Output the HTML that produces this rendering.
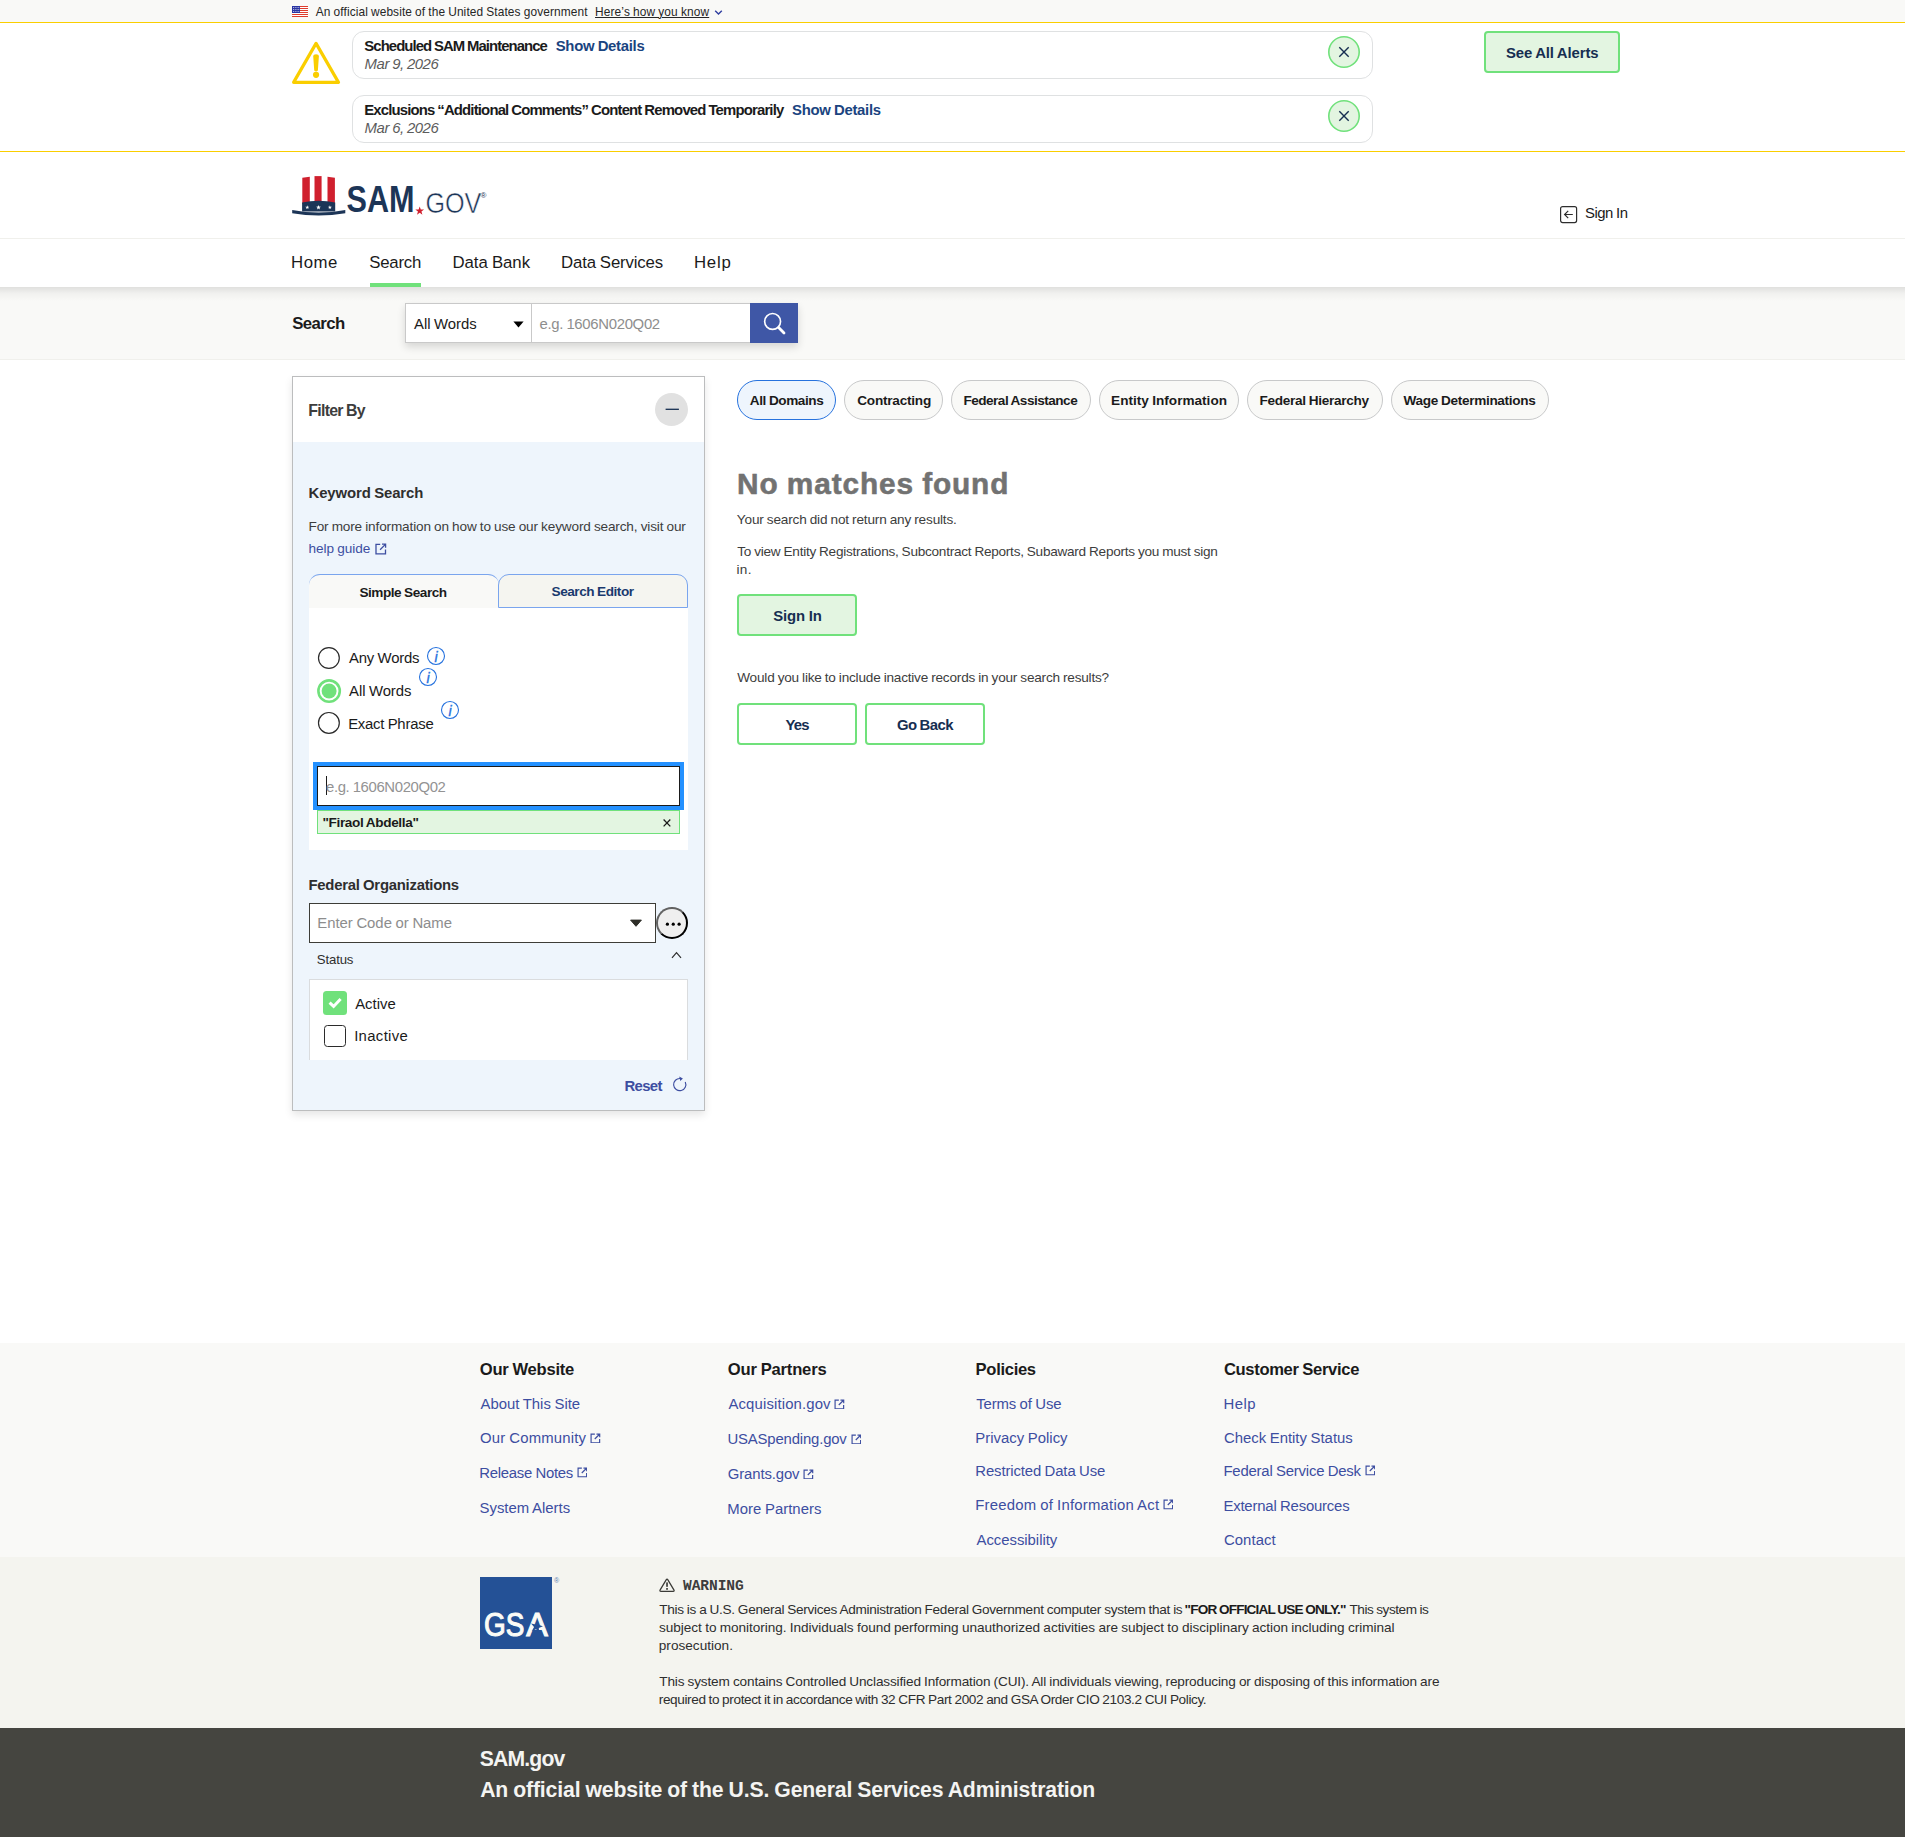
<!DOCTYPE html>
<html lang="en"><head><meta charset="utf-8"><title>SAM.gov | Search</title><style>
html,body{margin:0;padding:0;}
body{width:1905px;height:1837px;position:relative;overflow:hidden;background:#fff;
font-family:"Liberation Sans",sans-serif;color:#1b1b1b;}
.b{position:absolute;box-sizing:border-box;display:block;}
.t{position:absolute;white-space:nowrap;display:block;}
</style></head>
<body>
<div class="b" style="left:0px;top:0px;width:1905px;height:22px;background:#f9f9f7;"></div>
<div class="b" style="left:0px;top:22px;width:1905px;height:1px;background:#face00;"></div>
<svg class="b" style="left:292px;top:6px;" width="16" height="11" viewBox="0 0 16 11"><rect width="16" height="11" fill="#fff"/><rect y="0" width="16" height="1" fill="#de3c2d"/><rect y="2" width="16" height="1" fill="#de3c2d"/><rect y="4" width="16" height="1" fill="#de3c2d"/><rect y="6" width="16" height="1" fill="#de3c2d"/><rect y="8" width="16" height="1" fill="#de3c2d"/><rect y="10" width="16" height="1" fill="#de3c2d"/><rect width="8" height="7" fill="#2a35a3"/><rect x="1.00" y="1.10" width="0.8" height="0.8" fill="#fff"/><rect x="2.80" y="1.10" width="0.8" height="0.8" fill="#fff"/><rect x="4.60" y="1.10" width="0.8" height="0.8" fill="#fff"/><rect x="6.40" y="1.10" width="0.8" height="0.8" fill="#fff"/><rect x="1.00" y="3.10" width="0.8" height="0.8" fill="#fff"/><rect x="2.80" y="3.10" width="0.8" height="0.8" fill="#fff"/><rect x="4.60" y="3.10" width="0.8" height="0.8" fill="#fff"/><rect x="6.40" y="3.10" width="0.8" height="0.8" fill="#fff"/><rect x="1.00" y="5.10" width="0.8" height="0.8" fill="#fff"/><rect x="2.80" y="5.10" width="0.8" height="0.8" fill="#fff"/><rect x="4.60" y="5.10" width="0.8" height="0.8" fill="#fff"/><rect x="6.40" y="5.10" width="0.8" height="0.8" fill="#fff"/></svg>
<span class="t" id="t1" style="left:315.76px;top:3px;font-size:11.90px;line-height:18px;font-weight:400;color:#262626;font-family:'Liberation Sans', sans-serif;letter-spacing:0.109px;word-spacing:-0.36px;">An official website of the United States government</span>
<span class="t" id="t2" style="left:595.04px;top:3px;font-size:11.90px;line-height:18px;font-weight:400;color:#262626;font-family:'Liberation Sans', sans-serif;letter-spacing:0.129px;word-spacing:-0.36px;text-decoration:underline;text-underline-offset:1.2px;text-decoration-thickness:1px;">Here’s how you know</span>
<svg class="b" style="left:714px;top:8.8px;" width="9" height="7" viewBox="0 0 9 7"><path d="M1.2 1.8 L4.5 5 L7.8 1.8" fill="none" stroke="#2f3ea0" stroke-width="1.4"/></svg>
<div class="b" style="left:0px;top:151px;width:1905px;height:1px;background:#face00;"></div>
<svg class="b" style="left:290px;top:40px;" width="52" height="46" viewBox="0 0 52 46"><path d="M26.05 3.4 L48.5 42.35 H3.6 Z" fill="none" stroke="#face00" stroke-width="3.2" stroke-linejoin="round"/><path d="M23.2 16 Q23.2 14.3 26.05 14.3 Q28.9 14.3 28.9 16 L27.9 30.3 Q27.9 31.4 26.05 31.4 Q24.2 31.4 24.2 30.3 Z" fill="#face00"/><circle cx="26.05" cy="34.8" r="3.1" fill="#face00"/></svg>
<div class="b" style="left:352px;top:31px;width:1021px;height:48px;border:1px solid #dfe1e2;border-radius:12px;background:#fff;"></div>
<span class="t" id="t3" style="left:364.35px;top:36px;font-size:14.90px;line-height:20px;font-weight:700;color:#1b1b1b;font-family:'Liberation Sans', sans-serif;letter-spacing:-0.934px;word-spacing:-0.45px;">Scheduled SAM Maintenance</span>
<span class="t" id="t4" style="left:555.72px;top:36px;font-size:14.90px;line-height:20px;font-weight:700;color:#1a4480;font-family:'Liberation Sans', sans-serif;letter-spacing:-0.291px;word-spacing:-0.45px;">Show Details</span>
<span class="t" id="t5" style="left:364.61px;top:54px;font-size:14.90px;line-height:20px;font-weight:400;color:#5c5c5c;font-family:'Liberation Sans', sans-serif;letter-spacing:-0.451px;word-spacing:-0.45px;font-style:italic;">Mar 9, 2026</span>
<svg class="b" style="left:1328px;top:36px;" width="32" height="32" viewBox="0 0 32 32"><circle cx="16" cy="16" r="15.2" fill="#e3f5e1" stroke="#70e17b" stroke-width="1.6"/><path d="M11.3 11.3 L20.7 20.7 M20.7 11.3 L11.3 20.7" stroke="#162e51" stroke-width="1.4" fill="none"/></svg>
<div class="b" style="left:352px;top:95px;width:1021px;height:48px;border:1px solid #dfe1e2;border-radius:12px;background:#fff;"></div>
<span class="t" id="t6" style="left:364.14px;top:100px;font-size:14.90px;line-height:20px;font-weight:700;color:#1b1b1b;font-family:'Liberation Sans', sans-serif;letter-spacing:-0.830px;word-spacing:-0.45px;">Exclusions “Additional Comments” Content Removed Temporarily</span>
<span class="t" id="t7" style="left:792.00px;top:100px;font-size:14.90px;line-height:20px;font-weight:700;color:#1a4480;font-family:'Liberation Sans', sans-serif;letter-spacing:-0.286px;word-spacing:-0.45px;">Show Details</span>
<span class="t" id="t8" style="left:364.61px;top:118px;font-size:14.90px;line-height:20px;font-weight:400;color:#5c5c5c;font-family:'Liberation Sans', sans-serif;letter-spacing:-0.451px;word-spacing:-0.45px;font-style:italic;">Mar 6, 2026</span>
<svg class="b" style="left:1328px;top:100px;" width="32" height="32" viewBox="0 0 32 32"><circle cx="16" cy="16" r="15.2" fill="#e3f5e1" stroke="#70e17b" stroke-width="1.6"/><path d="M11.3 11.3 L20.7 20.7 M20.7 11.3 L11.3 20.7" stroke="#162e51" stroke-width="1.4" fill="none"/></svg>
<div class="b" style="left:1484px;top:31px;width:136px;height:42px;background:#e3f5e1;border:2px solid #70e17b;border-radius:4px;"></div>
<span class="t" id="t9" style="left:1506.00px;top:43px;font-size:14.90px;line-height:20px;font-weight:700;color:#162e51;font-family:'Liberation Sans', sans-serif;letter-spacing:-0.115px;word-spacing:-0.45px;">See All Alerts</span>
<div class="b" style="left:0px;top:238px;width:1905px;height:1px;background:#f0f0ec;"></div>
<svg class="b" style="left:291px;top:175px;" width="202" height="46" viewBox="0 0 202 46"><path d="M11.3 2.7 L18.8 1.8 V29 H11.3 Z" fill="#d0202e"/><path d="M23.5 1.1 H30.6 V29 H23.5 Z" fill="#d0202e"/><path d="M36.5 1.8 L43.9 2.7 V29 H36.5 Z" fill="#d0202e"/><path d="M11.1 27.5 Q27.65 23.9 44.2 27.5 V36.5 H11.1 Z" fill="#1c3557"/><path d="M1.2 34.9 Q27.7 39.9 54.3 34.9 L54.3 38.2 Q27.7 42.6 1.2 38.2 Z" fill="#1c3557"/><polygon transform="translate(16.3,32.4) scale(0.21)" points="0,-10 2.35,-3.24 9.51,-3.09 3.8,1.24 5.88,8.09 0,4 -5.88,8.09 -3.8,1.24 -9.51,-3.09 -2.35,-3.24" fill="#fff"/><polygon transform="translate(27.5,32.4) scale(0.25)" points="0,-10 2.35,-3.24 9.51,-3.09 3.8,1.24 5.88,8.09 0,4 -5.88,8.09 -3.8,1.24 -9.51,-3.09 -2.35,-3.24" fill="#fff"/><polygon transform="translate(38.9,32.4) scale(0.21)" points="0,-10 2.35,-3.24 9.51,-3.09 3.8,1.24 5.88,8.09 0,4 -5.88,8.09 -3.8,1.24 -9.51,-3.09 -2.35,-3.24" fill="#fff"/><text x="55.6" y="37.4" font-family="Liberation Sans, sans-serif" font-weight="700" font-size="36.9" fill="#1c3557" textLength="68" lengthAdjust="spacingAndGlyphs">SAM</text><polygon transform="translate(128.7,36) scale(0.46)" points="0,-10 2.35,-3.24 9.51,-3.09 3.8,1.24 5.88,8.09 0,4 -5.88,8.09 -3.8,1.24 -9.51,-3.09 -2.35,-3.24" fill="#d0202e"/><text x="134.4" y="38" font-family="Liberation Sans, sans-serif" font-weight="400" font-size="29.3" fill="#1c3557" stroke="#fff" stroke-width="0.55" textLength="56" lengthAdjust="spacingAndGlyphs">GOV</text><text x="189.6" y="23.1" font-family="Liberation Sans, sans-serif" font-size="8" fill="#1c3557">®</text></svg>
<svg class="b" style="left:1559px;top:205px;" width="20" height="20" viewBox="0 0 20 20"><rect x="1.6" y="1.6" width="16" height="16" rx="2" fill="none" stroke="#2e2e2e" stroke-width="1.2"/><path d="M13.8 9.5 H5.8 M9.2 5.9 L5.6 9.5 L9.2 13.1" fill="none" stroke="#2e2e2e" stroke-width="1.2"/></svg>
<span class="t" id="t10" style="left:1585.01px;top:203px;font-size:14.90px;line-height:20px;font-weight:400;color:#1b1b1b;font-family:'Liberation Sans', sans-serif;letter-spacing:-0.475px;word-spacing:-0.45px;">Sign In</span>
<div class="b" style="left:0px;top:239px;width:1905px;height:48px;background:#fff;"></div>
<span class="t" id="t11" style="left:290.99px;top:251px;font-size:16.80px;line-height:23px;font-weight:400;color:#1b1b1b;font-family:'Liberation Sans', sans-serif;letter-spacing:0.554px;word-spacing:-0.50px;">Home</span>
<span class="t" id="t12" style="left:369.16px;top:251px;font-size:16.80px;line-height:23px;font-weight:400;color:#1b1b1b;font-family:'Liberation Sans', sans-serif;letter-spacing:-0.184px;word-spacing:-0.50px;">Search</span>
<span class="t" id="t13" style="left:452.48px;top:251px;font-size:16.80px;line-height:23px;font-weight:400;color:#1b1b1b;font-family:'Liberation Sans', sans-serif;letter-spacing:-0.039px;word-spacing:-0.50px;">Data Bank</span>
<span class="t" id="t14" style="left:560.98px;top:251px;font-size:16.80px;line-height:23px;font-weight:400;color:#1b1b1b;font-family:'Liberation Sans', sans-serif;letter-spacing:-0.146px;word-spacing:-0.50px;">Data Services</span>
<span class="t" id="t15" style="left:693.98px;top:251px;font-size:16.80px;line-height:23px;font-weight:400;color:#1b1b1b;font-family:'Liberation Sans', sans-serif;letter-spacing:0.747px;word-spacing:-0.50px;">Help</span>
<div class="b" style="left:370px;top:283px;width:51px;height:4px;background:#70e17b;"></div>
<div class="b" style="left:0px;top:287px;width:1905px;height:72px;background:#f9f9f7;"></div>
<div class="b" style="left:0px;top:287px;width:1905px;height:14px;background:linear-gradient(rgba(0,0,0,.10),rgba(0,0,0,.035) 45%,rgba(0,0,0,0));"></div>
<div class="b" style="left:0px;top:359px;width:1905px;height:1px;background:#f0f0ec;"></div>
<span class="t" id="t16" style="left:292.19px;top:312px;font-size:16.80px;line-height:23px;font-weight:700;color:#1b1b1b;font-family:'Liberation Sans', sans-serif;letter-spacing:-0.558px;word-spacing:-0.50px;">Search</span>
<div class="b" style="left:405px;top:303px;width:393px;height:40px;box-shadow:0 4px 8px rgba(0,0,0,.14);"></div>
<div class="b" style="left:405px;top:303px;width:127px;height:40px;background:#fff;border:1px solid #c9c9c9;"></div>
<div class="b" style="left:531px;top:303px;width:220px;height:40px;background:#fff;border:1px solid #c9c9c9;"></div>
<span class="t" id="t17" style="left:414.07px;top:314px;font-size:14.90px;line-height:20px;font-weight:400;color:#1b1b1b;font-family:'Liberation Sans', sans-serif;letter-spacing:-0.056px;word-spacing:-0.45px;">All Words</span>
<svg class="b" style="left:513px;top:321px;" width="11" height="7" viewBox="0 0 11 7"><path d="M0.4 0.6 H10.6 L5.5 6.6 Z" fill="#000"/></svg>
<span class="t" id="t18" style="left:539.45px;top:314px;font-size:14.90px;line-height:20px;font-weight:400;color:#8e8e8e;font-family:'Liberation Sans', sans-serif;letter-spacing:-0.313px;word-spacing:-0.45px;">e.g. 1606N020Q02</span>
<div class="b" style="left:750px;top:303px;width:48px;height:40px;background:#3f57a6;"></div>
<svg class="b" style="left:760px;top:310px;" width="28" height="26" viewBox="0 0 28 26"><circle cx="12.6" cy="11.45" r="7.95" fill="none" stroke="#fff" stroke-width="1.65"/><path d="M18.6 17.6 L24.0 23.0" stroke="#fff" stroke-width="2.8" stroke-linecap="round"/></svg>
<div class="b" style="left:292px;top:376px;width:413px;height:735px;background:#eef5fc;border:1px solid #bcbdbe;box-shadow:0 4px 8px rgba(0,0,0,.10);"></div>
<div class="b" style="left:293px;top:377px;width:411px;height:65px;background:#fff;"></div>
<span class="t" id="t19" style="left:308.31px;top:400px;font-size:15.90px;line-height:21px;font-weight:700;color:#3d3d3d;font-family:'Liberation Sans', sans-serif;letter-spacing:-0.731px;word-spacing:-0.48px;">Filter By</span>
<svg class="b" style="left:655px;top:393px;" width="33" height="33" viewBox="0 0 33 33"><circle cx="16.5" cy="16.5" r="16.5" fill="#e1e1e1"/><path d="M10.6 16.3 H23.9" stroke="#162e51" stroke-width="1.3"/></svg>
<span class="t" id="t20" style="left:308.52px;top:483px;font-size:14.90px;line-height:20px;font-weight:700;color:#2e2e2e;font-family:'Liberation Sans', sans-serif;letter-spacing:-0.113px;word-spacing:-0.45px;">Keyword Search</span>
<span class="t" id="t21" style="left:308.50px;top:517px;font-size:13.60px;line-height:19px;font-weight:400;color:#3d3d3d;font-family:'Liberation Sans', sans-serif;letter-spacing:-0.151px;word-spacing:-0.41px;">For more information on how to use our keyword search, visit our</span>
<span class="t" id="t22" style="left:308.44px;top:539px;font-size:13.60px;line-height:19px;font-weight:400;color:#3d4ea1;font-family:'Liberation Sans', sans-serif;letter-spacing:-0.042px;word-spacing:-0.41px;">help guide</span>
<svg class="b" style="left:374.4px;top:542.6px;" width="13.6" height="12" viewBox="0 0 12 12"><path d="M5.4 1.3 H1.2 V10.8 H10.7 V6.6" fill="none" stroke="#3d4ea1" stroke-width="1.3"/><path d="M7.2 1.2 H10.8 V4.8 M10.6 1.4 L5.3 6.7" fill="none" stroke="#3d4ea1" stroke-width="1.3"/></svg>
<div class="b" style="left:309px;top:574px;width:190px;height:35px;background:#f9f9f7;border-top:1px solid #7aa5ee;border-radius:11px 11px 0 0;"></div>
<div class="b" style="left:498px;top:574px;width:190px;height:34px;background:#f5f5f0;border:1px solid #7aa5ee;border-radius:11px 11px 0 0;"></div>
<span class="t" id="t23" style="left:359.45px;top:583px;font-size:13.60px;line-height:19px;font-weight:700;color:#1b1b1b;font-family:'Liberation Sans', sans-serif;letter-spacing:-0.467px;word-spacing:-0.41px;">Simple Search</span>
<span class="t" id="t24" style="left:551.57px;top:582px;font-size:13.60px;line-height:19px;font-weight:700;color:#1a3a6e;font-family:'Liberation Sans', sans-serif;letter-spacing:-0.459px;word-spacing:-0.41px;">Search Editor</span>
<div class="b" style="left:309px;top:608px;width:379px;height:242px;background:#fff;"></div>
<svg class="b" style="left:317px;top:646px;" width="24" height="24" viewBox="0 0 24 24"><circle cx="11.9" cy="11.95" r="10.4" fill="#fff" stroke="#2b2b2b" stroke-width="1.2"/></svg>
<span class="t" id="t25" style="left:349.07px;top:648px;font-size:14.90px;line-height:20px;font-weight:400;color:#1b1b1b;font-family:'Liberation Sans', sans-serif;letter-spacing:-0.203px;word-spacing:-0.45px;">Any Words</span>
<svg class="b" style="left:426.1px;top:646.1px;" width="20" height="20" viewBox="0 0 20 20"><circle cx="10" cy="10" r="8.5" fill="#fff" stroke="#2672de" stroke-width="1.1"/><text x="10" y="15.7" text-anchor="middle" font-family="Liberation Sans, sans-serif" font-style="italic" font-size="14.2" fill="#2672de" stroke="#2672de" stroke-width="0.35">i</text></svg>
<svg class="b" style="left:316px;top:678px;" width="26" height="26" viewBox="0 0 26 26"><circle cx="13.1" cy="13.05" r="10.7" fill="#fff" stroke="#70e17b" stroke-width="2.6"/><circle cx="13.1" cy="13.05" r="7.5" fill="#70e17b"/></svg>
<span class="t" id="t26" style="left:349.07px;top:681px;font-size:14.90px;line-height:20px;font-weight:400;color:#1b1b1b;font-family:'Liberation Sans', sans-serif;letter-spacing:-0.088px;word-spacing:-0.45px;">All Words</span>
<svg class="b" style="left:418.05px;top:667.25px;" width="20" height="20" viewBox="0 0 20 20"><circle cx="10" cy="10" r="8.5" fill="#fff" stroke="#2672de" stroke-width="1.1"/><text x="10" y="15.7" text-anchor="middle" font-family="Liberation Sans, sans-serif" font-style="italic" font-size="14.2" fill="#2672de" stroke="#2672de" stroke-width="0.35">i</text></svg>
<svg class="b" style="left:317px;top:711px;" width="24" height="24" viewBox="0 0 24 24"><circle cx="11.9" cy="11.9" r="10.4" fill="#fff" stroke="#2b2b2b" stroke-width="1.2"/></svg>
<span class="t" id="t27" style="left:348.15px;top:714px;font-size:14.90px;line-height:20px;font-weight:400;color:#1b1b1b;font-family:'Liberation Sans', sans-serif;letter-spacing:-0.235px;word-spacing:-0.45px;">Exact Phrase</span>
<svg class="b" style="left:440.15px;top:700.25px;" width="20" height="20" viewBox="0 0 20 20"><circle cx="10" cy="10" r="8.5" fill="#fff" stroke="#2672de" stroke-width="1.1"/><text x="10" y="15.7" text-anchor="middle" font-family="Liberation Sans, sans-serif" font-style="italic" font-size="14.2" fill="#2672de" stroke="#2672de" stroke-width="0.35">i</text></svg>
<div class="b" style="left:313px;top:762px;width:371px;height:48px;background:#2491ff;"></div>
<div class="b" style="left:317px;top:766px;width:363px;height:40px;background:#fff;border:1px solid #1b1b1b;"></div>
<div class="b" style="left:326px;top:776px;width:1px;height:19px;background:#1b1b1b;"></div>
<span class="t" id="t28" style="left:326.03px;top:777px;font-size:14.90px;line-height:20px;font-weight:400;color:#939393;font-family:'Liberation Sans', sans-serif;letter-spacing:-0.369px;word-spacing:-0.45px;">e.g. 1606N020Q02</span>
<div class="b" style="left:317px;top:810px;width:363px;height:24px;background:#e3f5e1;border:1px solid #70e17b;"></div>
<span class="t" id="t29" style="left:322.48px;top:813px;font-size:13.60px;line-height:19px;font-weight:700;color:#1b1b1b;font-family:'Liberation Sans', sans-serif;letter-spacing:-0.367px;word-spacing:-0.41px;">"Firaol Abdella"</span>
<svg class="b" style="left:662px;top:818px;" width="10" height="10" viewBox="0 0 10 10"><path d="M1.6 1.5 L8.3 8.4 M8.3 1.5 L1.6 8.4" stroke="#1b1b1b" stroke-width="1.3" fill="none"/></svg>
<span class="t" id="t30" style="left:308.52px;top:875px;font-size:14.90px;line-height:20px;font-weight:700;color:#2e2e2e;font-family:'Liberation Sans', sans-serif;letter-spacing:-0.265px;word-spacing:-0.45px;">Federal Organizations</span>
<div class="b" style="left:309px;top:903px;width:347px;height:40px;background:#fff;border:1px solid #3d3d37;"></div>
<span class="t" id="t31" style="left:317.28px;top:913px;font-size:14.90px;line-height:20px;font-weight:400;color:#8d8d8d;font-family:'Liberation Sans', sans-serif;letter-spacing:-0.026px;word-spacing:-0.45px;">Enter Code or Name</span>
<svg class="b" style="left:629px;top:918.6px;" width="14" height="9" viewBox="0 0 14 9"><path d="M1.6 1.1 H12.4 L7 7.3 Z" fill="#2e2e28" stroke="#2e2e28" stroke-width="1" stroke-linejoin="round"/></svg>
<div class="b" style="left:656.4px;top:907.1px;width:31.8px;height:31.8px;background:#efefef;border:2px solid #000;border-color:#626262 #000 #000 #626262;border-radius:50%;"></div>
<svg class="b" style="left:664px;top:920px;" width="18" height="8" viewBox="0 0 18 8"><circle cx="3.4" cy="4.2" r="1.6" fill="#000"/><circle cx="9.25" cy="4.2" r="1.6" fill="#000"/><circle cx="15.1" cy="4.2" r="1.6" fill="#000"/></svg>
<span class="t" id="t32" style="left:316.76px;top:950px;font-size:13.20px;line-height:19px;font-weight:400;color:#2e2e2e;font-family:'Liberation Sans', sans-serif;letter-spacing:-0.134px;word-spacing:-0.40px;">Status</span>
<svg class="b" style="left:670px;top:950px;" width="13" height="10" viewBox="0 0 13 10"><path d="M2.0 7.8 L6.5 2.7 L11.0 7.8" fill="none" stroke="#2e2e2e" stroke-width="1.2"/></svg>
<div class="b" style="left:309px;top:979px;width:379px;height:81px;background:#fff;border:1px solid #dadcde;border-bottom:0;"></div>
<svg class="b" style="left:323px;top:991px;" width="24" height="24" viewBox="0 0 24 24"><rect width="24" height="24" rx="3.5" fill="#70e17b"/><path d="M6.6 11.6 L10.6 15.4 L17.6 7.9" fill="none" stroke="#fff" stroke-width="3"/></svg>
<span class="t" id="t33" style="left:355.20px;top:994px;font-size:14.90px;line-height:20px;font-weight:400;color:#1b1b1b;font-family:'Liberation Sans', sans-serif;letter-spacing:0.001px;word-spacing:-0.45px;">Active</span>
<div class="b" style="left:324px;top:1025px;width:22px;height:22px;background:#fff;border:1.3px solid #2b2b2b;border-radius:3.5px;"></div>
<span class="t" id="t34" style="left:354.15px;top:1026px;font-size:14.90px;line-height:20px;font-weight:400;color:#1b1b1b;font-family:'Liberation Sans', sans-serif;letter-spacing:0.335px;word-spacing:-0.45px;">Inactive</span>
<span class="t" id="t35" style="left:624.53px;top:1076px;font-size:14.90px;line-height:20px;font-weight:700;color:#3d4ea1;font-family:'Liberation Sans', sans-serif;letter-spacing:-0.674px;word-spacing:-0.45px;">Reset</span>
<svg class="b" style="left:671px;top:1075px;" width="18" height="18" viewBox="0 0 18 18"><path d="M9.3 3.5 A6.1 6.1 0 1 0 14.25 7.0" fill="none" stroke="#3d4ea1" stroke-width="1.15"/><path d="M8.2 1.4 L11.9 3.6 L9.3 5.9 Z" fill="#3d4ea1"/></svg>
<div class="b" style="left:737px;top:380px;width:99px;height:40px;background:#eef5fd;border:1px solid #2672de;border-radius:20px;"></div>
<span class="t" id="t36" style="left:749.80px;top:391px;font-size:13.60px;line-height:19px;font-weight:700;color:#1b1b1b;font-family:'Liberation Sans', sans-serif;letter-spacing:-0.414px;word-spacing:-0.41px;">All Domains</span>
<div class="b" style="left:844px;top:380px;width:99px;height:40px;background:#f9f9f7;border:1px solid #c8c9ca;border-radius:20px;"></div>
<span class="t" id="t37" style="left:857.24px;top:391px;font-size:13.60px;line-height:19px;font-weight:700;color:#1b1b1b;font-family:'Liberation Sans', sans-serif;letter-spacing:-0.230px;word-spacing:-0.41px;">Contracting</span>
<div class="b" style="left:951px;top:380px;width:140px;height:40px;background:#f9f9f7;border:1px solid #c8c9ca;border-radius:20px;"></div>
<span class="t" id="t38" style="left:963.43px;top:391px;font-size:13.60px;line-height:19px;font-weight:700;color:#1b1b1b;font-family:'Liberation Sans', sans-serif;letter-spacing:-0.514px;word-spacing:-0.41px;">Federal Assistance</span>
<div class="b" style="left:1099px;top:380px;width:140px;height:40px;background:#f9f9f7;border:1px solid #c8c9ca;border-radius:20px;"></div>
<span class="t" id="t39" style="left:1111.10px;top:391px;font-size:13.60px;line-height:19px;font-weight:700;color:#1b1b1b;font-family:'Liberation Sans', sans-serif;letter-spacing:0.001px;word-spacing:-0.41px;">Entity Information</span>
<div class="b" style="left:1247px;top:380px;width:136px;height:40px;background:#f9f9f7;border:1px solid #c8c9ca;border-radius:20px;"></div>
<span class="t" id="t40" style="left:1259.50px;top:391px;font-size:13.60px;line-height:19px;font-weight:700;color:#1b1b1b;font-family:'Liberation Sans', sans-serif;letter-spacing:-0.300px;word-spacing:-0.41px;">Federal Hierarchy</span>
<div class="b" style="left:1391px;top:380px;width:158px;height:40px;background:#f9f9f7;border:1px solid #c8c9ca;border-radius:20px;"></div>
<span class="t" id="t41" style="left:1403.60px;top:391px;font-size:13.60px;line-height:19px;font-weight:700;color:#1b1b1b;font-family:'Liberation Sans', sans-serif;letter-spacing:-0.329px;word-spacing:-0.41px;">Wage Determinations</span>
<span class="t" id="t42" style="left:737.11px;top:465px;font-size:29.80px;line-height:37px;font-weight:700;color:#727272;font-family:'Liberation Sans', sans-serif;letter-spacing:0.875px;word-spacing:-0.89px;-webkit-text-stroke:0.55px #727272;">No matches found</span>
<span class="t" id="t43" style="left:736.86px;top:510px;font-size:13.60px;line-height:19px;font-weight:400;color:#3d3d3d;font-family:'Liberation Sans', sans-serif;letter-spacing:-0.178px;word-spacing:-0.41px;">Your search did not return any results.</span>
<span class="t" id="t44" style="left:737.33px;top:542px;font-size:13.60px;line-height:19px;font-weight:400;color:#3d3d3d;font-family:'Liberation Sans', sans-serif;letter-spacing:-0.261px;word-spacing:-0.41px;">To view Entity Registrations, Subcontract Reports, Subaward Reports you must sign</span>
<span class="t" id="t45" style="left:736.56px;top:560px;font-size:13.60px;line-height:19px;font-weight:400;color:#3d3d3d;font-family:'Liberation Sans', sans-serif;letter-spacing:0.299px;word-spacing:-0.41px;">in.</span>
<div class="b" style="left:737px;top:594px;width:120px;height:42px;background:#e3f5e1;border:2px solid #70e17b;border-radius:4px;"></div>
<span class="t" id="t46" style="left:773.25px;top:606px;font-size:14.90px;line-height:20px;font-weight:700;color:#162e51;font-family:'Liberation Sans', sans-serif;letter-spacing:-0.108px;word-spacing:-0.45px;">Sign In</span>
<span class="t" id="t47" style="left:737.26px;top:668px;font-size:13.60px;line-height:19px;font-weight:400;color:#3d3d3d;font-family:'Liberation Sans', sans-serif;letter-spacing:-0.210px;word-spacing:-0.41px;">Would you like to include inactive records in your search results?</span>
<div class="b" style="left:737px;top:703px;width:120px;height:42px;background:#fff;border:2px solid #70e17b;border-radius:4px;"></div>
<span class="t" id="t48" style="left:785.40px;top:715px;font-size:14.90px;line-height:20px;font-weight:700;color:#162e51;font-family:'Liberation Sans', sans-serif;letter-spacing:-0.806px;word-spacing:-0.45px;">Yes</span>
<div class="b" style="left:865px;top:703px;width:120px;height:42px;background:#fff;border:2px solid #70e17b;border-radius:4px;"></div>
<span class="t" id="t49" style="left:897.06px;top:715px;font-size:14.90px;line-height:20px;font-weight:700;color:#162e51;font-family:'Liberation Sans', sans-serif;letter-spacing:-0.597px;word-spacing:-0.45px;">Go Back</span>
<div class="b" style="left:0px;top:1343px;width:1905px;height:214px;background:#f9f9f7;"></div>
<span class="t" id="t50" style="left:479.76px;top:1358px;font-size:16.60px;line-height:23px;font-weight:700;color:#1b1b1b;font-family:'Liberation Sans', sans-serif;letter-spacing:-0.236px;word-spacing:-0.50px;">Our Website</span>
<span class="t" id="t51" style="left:727.76px;top:1358px;font-size:16.60px;line-height:23px;font-weight:700;color:#1b1b1b;font-family:'Liberation Sans', sans-serif;letter-spacing:-0.184px;word-spacing:-0.50px;">Our Partners</span>
<span class="t" id="t52" style="left:975.62px;top:1358px;font-size:16.60px;line-height:23px;font-weight:700;color:#1b1b1b;font-family:'Liberation Sans', sans-serif;letter-spacing:-0.319px;word-spacing:-0.50px;">Policies</span>
<span class="t" id="t53" style="left:1223.88px;top:1358px;font-size:16.60px;line-height:23px;font-weight:700;color:#1b1b1b;font-family:'Liberation Sans', sans-serif;letter-spacing:-0.341px;word-spacing:-0.50px;">Customer Service</span>
<span class="t" id="t54" style="left:480.47px;top:1394px;font-size:14.90px;line-height:20px;font-weight:400;color:#3d4ea1;font-family:'Liberation Sans', sans-serif;letter-spacing:-0.011px;word-spacing:-0.45px;">About This Site</span>
<span class="t" id="t55" style="left:480.00px;top:1428px;font-size:14.90px;line-height:20px;font-weight:400;color:#3d4ea1;font-family:'Liberation Sans', sans-serif;letter-spacing:0.188px;word-spacing:-0.45px;">Our Community</span>
<svg class="b" style="left:590.3px;top:1432.5px;" width="10.8" height="10.8" viewBox="0 0 12 12"><path d="M5.4 1.3 H1.2 V10.8 H10.7 V6.6" fill="none" stroke="#3d4ea1" stroke-width="1.3"/><path d="M7.2 1.2 H10.8 V4.8 M10.6 1.4 L5.3 6.7" fill="none" stroke="#3d4ea1" stroke-width="1.3"/></svg>
<span class="t" id="t56" style="left:479.31px;top:1463px;font-size:14.90px;line-height:20px;font-weight:400;color:#3d4ea1;font-family:'Liberation Sans', sans-serif;letter-spacing:-0.271px;word-spacing:-0.45px;">Release Notes</span>
<svg class="b" style="left:576.6px;top:1467.4px;" width="10.8" height="10.8" viewBox="0 0 12 12"><path d="M5.4 1.3 H1.2 V10.8 H10.7 V6.6" fill="none" stroke="#3d4ea1" stroke-width="1.3"/><path d="M7.2 1.2 H10.8 V4.8 M10.6 1.4 L5.3 6.7" fill="none" stroke="#3d4ea1" stroke-width="1.3"/></svg>
<span class="t" id="t57" style="left:479.50px;top:1498px;font-size:14.90px;line-height:20px;font-weight:400;color:#3d4ea1;font-family:'Liberation Sans', sans-serif;letter-spacing:0.005px;word-spacing:-0.45px;">System Alerts</span>
<span class="t" id="t58" style="left:728.47px;top:1394px;font-size:14.90px;line-height:20px;font-weight:400;color:#3d4ea1;font-family:'Liberation Sans', sans-serif;letter-spacing:0.139px;word-spacing:-0.45px;">Acquisition.gov</span>
<svg class="b" style="left:834.4px;top:1398.7px;" width="10.8" height="10.8" viewBox="0 0 12 12"><path d="M5.4 1.3 H1.2 V10.8 H10.7 V6.6" fill="none" stroke="#3d4ea1" stroke-width="1.3"/><path d="M7.2 1.2 H10.8 V4.8 M10.6 1.4 L5.3 6.7" fill="none" stroke="#3d4ea1" stroke-width="1.3"/></svg>
<span class="t" id="t59" style="left:727.49px;top:1429px;font-size:14.90px;line-height:20px;font-weight:400;color:#3d4ea1;font-family:'Liberation Sans', sans-serif;letter-spacing:-0.169px;word-spacing:-0.45px;">USASpending.gov</span>
<svg class="b" style="left:850.7px;top:1433.6px;" width="10.8" height="10.8" viewBox="0 0 12 12"><path d="M5.4 1.3 H1.2 V10.8 H10.7 V6.6" fill="none" stroke="#3d4ea1" stroke-width="1.3"/><path d="M7.2 1.2 H10.8 V4.8 M10.6 1.4 L5.3 6.7" fill="none" stroke="#3d4ea1" stroke-width="1.3"/></svg>
<span class="t" id="t60" style="left:727.78px;top:1464px;font-size:14.90px;line-height:20px;font-weight:400;color:#3d4ea1;font-family:'Liberation Sans', sans-serif;letter-spacing:-0.118px;word-spacing:-0.45px;">Grants.gov</span>
<svg class="b" style="left:803.2px;top:1468.5px;" width="10.8" height="10.8" viewBox="0 0 12 12"><path d="M5.4 1.3 H1.2 V10.8 H10.7 V6.6" fill="none" stroke="#3d4ea1" stroke-width="1.3"/><path d="M7.2 1.2 H10.8 V4.8 M10.6 1.4 L5.3 6.7" fill="none" stroke="#3d4ea1" stroke-width="1.3"/></svg>
<span class="t" id="t61" style="left:727.31px;top:1499px;font-size:14.90px;line-height:20px;font-weight:400;color:#3d4ea1;font-family:'Liberation Sans', sans-serif;letter-spacing:0.013px;word-spacing:-0.45px;">More Partners</span>
<span class="t" id="t62" style="left:976.18px;top:1394px;font-size:14.90px;line-height:20px;font-weight:400;color:#3d4ea1;font-family:'Liberation Sans', sans-serif;letter-spacing:-0.130px;word-spacing:-0.45px;">Terms of Use</span>
<span class="t" id="t63" style="left:975.31px;top:1428px;font-size:14.90px;line-height:20px;font-weight:400;color:#3d4ea1;font-family:'Liberation Sans', sans-serif;letter-spacing:0.001px;word-spacing:-0.45px;">Privacy Policy</span>
<span class="t" id="t64" style="left:975.31px;top:1461px;font-size:14.90px;line-height:20px;font-weight:400;color:#3d4ea1;font-family:'Liberation Sans', sans-serif;letter-spacing:-0.129px;word-spacing:-0.45px;">Restricted Data Use</span>
<span class="t" id="t65" style="left:975.31px;top:1495px;font-size:14.90px;line-height:20px;font-weight:400;color:#3d4ea1;font-family:'Liberation Sans', sans-serif;letter-spacing:0.220px;word-spacing:-0.45px;">Freedom of Information Act</span>
<svg class="b" style="left:1162.5px;top:1499.4px;" width="10.8" height="10.8" viewBox="0 0 12 12"><path d="M5.4 1.3 H1.2 V10.8 H10.7 V6.6" fill="none" stroke="#3d4ea1" stroke-width="1.3"/><path d="M7.2 1.2 H10.8 V4.8 M10.6 1.4 L5.3 6.7" fill="none" stroke="#3d4ea1" stroke-width="1.3"/></svg>
<span class="t" id="t66" style="left:976.47px;top:1530px;font-size:14.90px;line-height:20px;font-weight:400;color:#3d4ea1;font-family:'Liberation Sans', sans-serif;letter-spacing:-0.023px;word-spacing:-0.45px;">Accessibility</span>
<span class="t" id="t67" style="left:1223.43px;top:1394px;font-size:14.90px;line-height:20px;font-weight:400;color:#3d4ea1;font-family:'Liberation Sans', sans-serif;letter-spacing:0.462px;word-spacing:-0.45px;">Help</span>
<span class="t" id="t68" style="left:1223.94px;top:1428px;font-size:14.90px;line-height:20px;font-weight:400;color:#3d4ea1;font-family:'Liberation Sans', sans-serif;letter-spacing:-0.014px;word-spacing:-0.45px;">Check Entity Status</span>
<span class="t" id="t69" style="left:1223.43px;top:1461px;font-size:14.90px;line-height:20px;font-weight:400;color:#3d4ea1;font-family:'Liberation Sans', sans-serif;letter-spacing:-0.202px;word-spacing:-0.45px;">Federal Service Desk</span>
<svg class="b" style="left:1364.6px;top:1465.4px;" width="10.8" height="10.8" viewBox="0 0 12 12"><path d="M5.4 1.3 H1.2 V10.8 H10.7 V6.6" fill="none" stroke="#3d4ea1" stroke-width="1.3"/><path d="M7.2 1.2 H10.8 V4.8 M10.6 1.4 L5.3 6.7" fill="none" stroke="#3d4ea1" stroke-width="1.3"/></svg>
<span class="t" id="t70" style="left:1223.43px;top:1496px;font-size:14.90px;line-height:20px;font-weight:400;color:#3d4ea1;font-family:'Liberation Sans', sans-serif;letter-spacing:-0.192px;word-spacing:-0.45px;">External Resources</span>
<span class="t" id="t71" style="left:1223.94px;top:1530px;font-size:14.90px;line-height:20px;font-weight:400;color:#3d4ea1;font-family:'Liberation Sans', sans-serif;letter-spacing:0.070px;word-spacing:-0.45px;">Contact</span>
<div class="b" style="left:0px;top:1557px;width:1905px;height:171px;background:#f4f4ef;"></div>
<div class="b" style="left:480px;top:1577px;width:72px;height:72px;background:#245196;"></div>
<svg class="b" style="left:480px;top:1577px;" width="72" height="72" viewBox="0 0 72 72"><text x="4.0" y="59.2" font-family="Liberation Sans, sans-serif" font-size="34" fill="#fbfbf6" stroke="#fbfbf6" stroke-width="1.1" textLength="40.4" lengthAdjust="spacingAndGlyphs">GS</text><text x="46.3" y="59.2" font-family="Liberation Sans, sans-serif" font-size="34" fill="#fbfbf6" stroke="#fbfbf6" stroke-width="1.1" textLength="21.6" lengthAdjust="spacingAndGlyphs">A</text><polygon transform="translate(56.6,49.8) rotate(12) scale(0.64)" points="0,-10 2.35,-3.24 9.51,-3.09 3.8,1.24 5.88,8.09 0,4 -5.88,8.09 -3.8,1.24 -9.51,-3.09 -2.35,-3.24" fill="#245196"/></svg>
<span class="t" id="t72" style="left:554.01px;top:1575px;font-size:7.00px;line-height:11px;font-weight:400;color:#5b7cb0;font-family:'Liberation Sans', sans-serif;letter-spacing:6.458px;word-spacing:-0.21px;">®</span>
<svg class="b" style="left:658px;top:1577px;" width="18" height="16" viewBox="0 0 18 16"><path d="M8.16 2.81 Q9.03 1.35 9.90 2.81 L15.88 12.84 Q16.75 14.30 15.05 14.30 L3.00 14.30 Q1.30 14.30 2.17 12.84 Z" fill="none" stroke="#3a3a36" stroke-width="1.25"/><rect x="8.2" y="5.4" width="1.65" height="4.4" fill="#3a3a36"/><rect x="8.1" y="10.9" width="1.85" height="1.8" rx="0.5" fill="#3a3a36"/></svg>
<span class="t" id="t73" style="left:683.09px;top:1576px;font-size:14.60px;line-height:20px;font-weight:700;color:#3d3d3d;font-family:'Liberation Mono', monospace;letter-spacing:-0.115px;word-spacing:0.00px;">WARNING</span>
<span class="t" id="t74" style="left:659.24px;top:1600px;font-size:13.60px;line-height:19px;font-weight:400;color:#2e2e2e;font-family:'Liberation Sans', sans-serif;letter-spacing:-0.289px;word-spacing:-0.41px;">This is a U.S. General Services Administration Federal Government computer system that is</span>
<span class="t" id="t75" style="left:1184.61px;top:1600px;font-size:13.60px;line-height:19px;font-weight:700;color:#1b1b1b;font-family:'Liberation Sans', sans-serif;letter-spacing:-0.829px;word-spacing:-0.41px;">"FOR OFFICIAL USE ONLY."</span>
<span class="t" id="t76" style="left:1349.43px;top:1600px;font-size:13.60px;line-height:19px;font-weight:400;color:#2e2e2e;font-family:'Liberation Sans', sans-serif;letter-spacing:-0.446px;word-spacing:-0.41px;">This system is</span>
<span class="t" id="t77" style="left:659.06px;top:1618px;font-size:13.60px;line-height:19px;font-weight:400;color:#2e2e2e;font-family:'Liberation Sans', sans-serif;letter-spacing:-0.042px;word-spacing:-0.41px;">subject to monitoring. Individuals found performing unauthorized activities are subject to disciplinary action including criminal</span>
<span class="t" id="t78" style="left:658.80px;top:1636px;font-size:13.60px;line-height:19px;font-weight:400;color:#2e2e2e;font-family:'Liberation Sans', sans-serif;letter-spacing:0.005px;word-spacing:-0.41px;">prosecution.</span>
<span class="t" id="t79" style="left:659.24px;top:1672px;font-size:13.60px;line-height:19px;font-weight:400;color:#2e2e2e;font-family:'Liberation Sans', sans-serif;letter-spacing:-0.148px;word-spacing:-0.41px;">This system contains Controlled Unclassified Information (CUI). All individuals viewing, reproducing or disposing of this information are</span>
<span class="t" id="t80" style="left:658.74px;top:1690px;font-size:13.60px;line-height:19px;font-weight:400;color:#2e2e2e;font-family:'Liberation Sans', sans-serif;letter-spacing:-0.380px;word-spacing:-0.41px;">required to protect it in accordance with 32 CFR Part 2002 and GSA Order CIO 2103.2 CUI Policy.</span>
<div class="b" style="left:0px;top:1728px;width:1905px;height:109px;background:#454540;"></div>
<span class="t" id="t81" style="left:479.84px;top:1745px;font-size:21.20px;line-height:27px;font-weight:700;color:#f4f4f2;font-family:'Liberation Sans', sans-serif;letter-spacing:-0.862px;word-spacing:-0.64px;">SAM.gov</span>
<span class="t" id="t82" style="left:480.20px;top:1776px;font-size:21.20px;line-height:27px;font-weight:700;color:#f4f4f2;font-family:'Liberation Sans', sans-serif;letter-spacing:-0.143px;word-spacing:-0.64px;">An official website of the U.S. General Services Administration</span>
</body></html>
